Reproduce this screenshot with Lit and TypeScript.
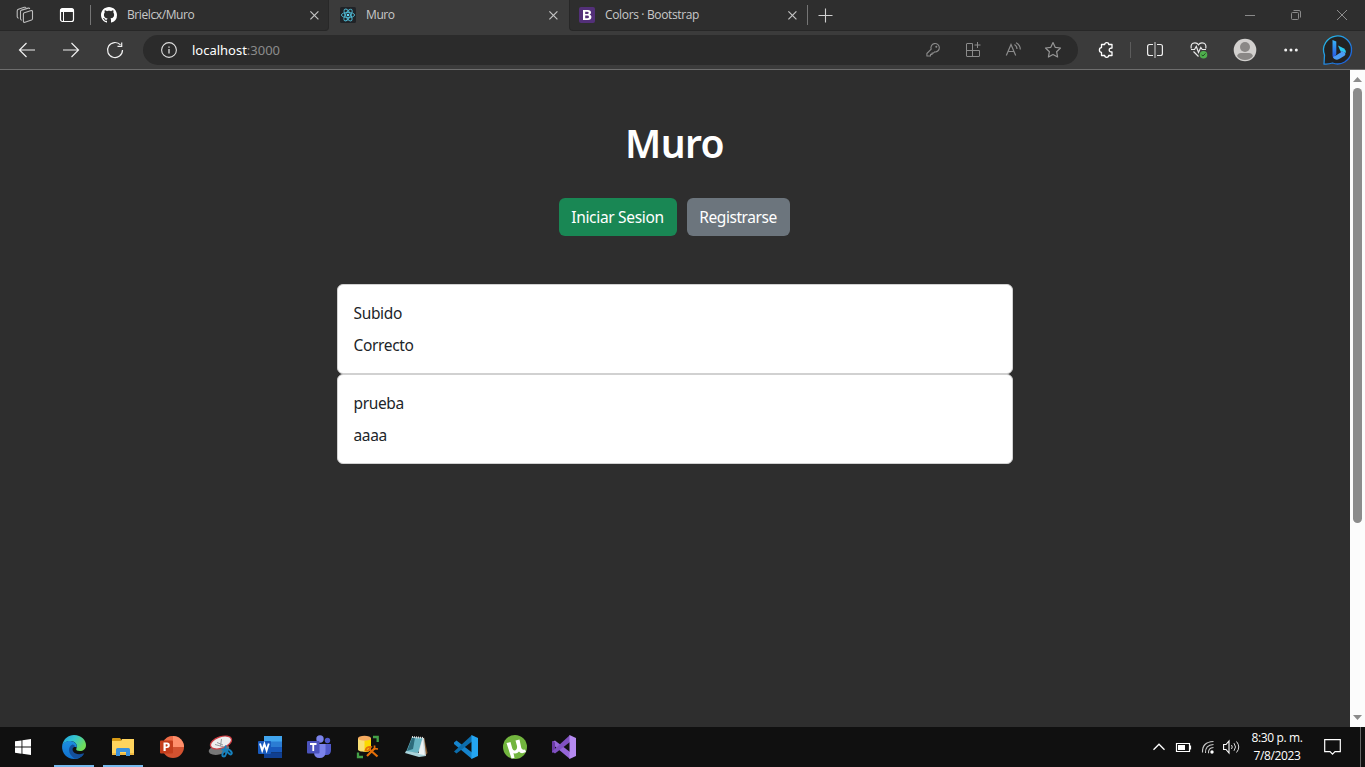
import { LitElement, html, css, svg } from 'lit';
import { customElement, property } from 'lit/decorators.js';

const poly = (points: string, fill: string) => svg`<polygon points=${points} fill=${fill} />`;

const glyphs: Record<string, [number, number, unknown]> = {
  workspaces: [18, 18, svg`<g fill="none" stroke="#bdbdbd" stroke-width="1.1" stroke-linejoin="round">
    <path d="M8.300 6.800 15.300 4.600Q16.500 4.400 16.500 5.500V12.500Q16.500 13.700 15.500 14.100L9 16.300Q7.400 16.600 7.400 15.300V8Q7.400 7.100 8.300 6.800Z"/>
    <path d="M4.500 12.800V5.600Q4.500 4.500 5.600 4.100L12.300 2.100Q13.500 1.900 13.700 3M4.500 12.800Q4.600 14 5.800 14.300"/>
    <path d="M1.200 10.800V5Q1.200 3.700 2.400 3.300L8.300 1.300Q9.600 1 10.200 1.600M1.200 10.800Q1.300 12 2.600 12.300"/></g>`],
  tabsmenu: [16, 16, svg`<rect x="1.5" y="1.5" width="13" height="13" rx="2" fill="none" stroke="#fff" stroke-width="1.2"/><path d="M1.5 5V3Q1.5 1.5 3 1.5H13Q14.5 1.5 14.5 3V5Z" fill="#fff"/><path d="M4.5 5V14.5" stroke="#fff"/>`],
  github: [16, 16, svg`<path fill="#fff" d="M8 0C3.58 0 0 3.58 0 8c0 3.54 2.29 6.53 5.47 7.59.4.07.55-.17.55-.38 0-.19-.01-.82-.01-1.49-2.01.37-2.53-.49-2.69-.94-.09-.23-.48-.94-.82-1.13-.28-.15-.68-.52-.01-.53.63-.01 1.08.58 1.23.82.72 1.21 1.87.87 2.33.66.07-.52.28-.87.51-1.07-1.78-.2-3.64-.89-3.64-3.95 0-.87.31-1.59.82-2.15-.08-.2-.36-1.02.08-2.12 0 0 .67-.21 2.2.82.64-.18 1.32-.27 2-.27s1.36.09 2 .27c1.53-1.04 2.2-.82 2.2-.82.44 1.1.16 1.92.08 2.12.51.56.82 1.27.82 2.15 0 3.07-1.87 3.75-3.65 3.95.29.25.54.73.54 1.48 0 1.07-.01 1.93-.01 2.2 0 .21.15.46.55.38A8.01 8.01 0 0 0 16 8c0-4.42-3.58-8-8-8z"/>`],
  react: [16, 16, svg`<rect width="16" height="16" rx="1.5" fill="#202327"/><g fill="none" stroke="#4fb9d3" stroke-width=".9"><ellipse cx="8" cy="8" rx="6.6" ry="2.6"/><ellipse cx="8" cy="8" rx="6.6" ry="2.6" transform="rotate(60 8 8)"/><ellipse cx="8" cy="8" rx="6.6" ry="2.6" transform="rotate(120 8 8)"/></g><circle cx="8" cy="8" r="1.3" fill="#61dafb"/>`],
  bootstrap: [16, 16, svg`<rect width="16" height="16" rx="2" fill="#533079"/><path fill="#fff" fill-rule="evenodd" d="M4 3H8.8C11 3 12 4.2 12 5.6C12 6.7 11.4 7.4 10.5 7.7C11.8 8 12.4 8.900 12.400 10.100C12.400 11.900 11.200 13 9 13H4ZM6.200 4.700V7H8.200Q9.700 7 9.700 5.800Q9.700 4.700 8.200 4.700ZM6.200 8.600V11.300H8.400Q10 11.300 10 9.900Q10 8.600 8.400 8.600Z"/>`],
  close: [10, 10, svg`<path d="M1.400 1.400 9.400 9.400M9.400 1.400 1.400 9.400" stroke="#c4c4c4" stroke-width="1.2"/>`],
  plus: [15, 15, svg`<path d="M7.5 .5V14.500M.5 7.500H14.500" stroke="#d0d0d0" stroke-width="1.1"/>`],
  min: [10, 10, svg`<path d="M0 5.500H10" stroke="#8a8a8a"/>`],
  restore: [10, 10, svg`<g fill="none" stroke="#8a8a8a"><rect x=".5" y="2.500" width="7" height="7" rx="1"/><path d="M2.500 .5H8Q9.500 .5 9.500 2V7.500"/></g>`],
  winclose: [10, 10, svg`<path d="M0 0 10 10M10 0 0 10" stroke="#8d8d8d"/>`],
  back: [18, 16, svg`<path d="M17 8H1.500M8.500 1 1.500 8 8.500 15" fill="none" stroke="#f0f0f0" stroke-width="1.200"/>`],
  forward: [18, 16, svg`<path d="M1 8H16.500M9.500 1 16.500 8 9.500 15" fill="none" stroke="#f0f0f0" stroke-width="1.200"/>`],
  reload: [18, 18, svg`<path d="M14.500 3.900A7.500 7.500 0 1 0 16.500 9M15.700 1.500V5.300H11.500" fill="none" stroke="#f0f0f0" stroke-width="1.200"/>`],
  info: [16, 16, svg`<circle cx="8" cy="8" r="7.400" fill="none" stroke="#dedede" stroke-width="1.100"/><path d="M8 7V11.500M8 4.500V5.800" stroke="#dedede" stroke-width="1.300"/>`],
  key: [14, 14, svg`<path d="M5.200 6.200A4.200 4.200 0 1 1 8.700 8.900L7.300 10.100H6V11.400H4.500V13H.9V10.500Z" fill="none" stroke="#8b8b8b" stroke-linejoin="round" stroke-width="1.100"/><circle cx="10.300" cy="3.800" r="1" fill="#8b8b8b"/>`],
  apps: [16, 16, svg`<path d="M7.500 1.500H2Q1.500 1.500 1.500 2V14Q1.500 14.500 2 14.500H14Q14.500 14.500 14.500 14V8.500H1.500M7.500 1.500V14.500M12.500 0V6M9.500 3H15.500" fill="none" stroke="#8b8b8b"/>`],
  read: [16, 16, svg`<path d="M1.300 13.500 6 2.500 10.700 13.500M3.100 9.500H9" fill="none" stroke="#8b8b8b" stroke-width="1.200"/><path d="M9.500 2.500Q12 4 12 7M11 .8Q15.300 2.800 15.300 7.500" fill="none" stroke="#8b8b8b" stroke-width="1.200"/>`],
  star: [18, 18, svg`<path d="M9 1.500 11.200 6.300 16.500 7 12.600 10.700 13.600 16 9 13.400 4.400 16 5.400 10.700 1.500 7 6.800 6.300Z" fill="none" stroke="#969696" stroke-width="1.200" stroke-linejoin="round"/>`],
  puzzle: [16, 16, svg`<path d="M3.500 2.500H6.700Q6.700 .700 8.700 .700Q10.700 .700 10.700 2.500H14V6Q11.200 5.900 11.200 8Q11.200 10.100 14 10V13.500H10.700Q10.700 15.300 8.700 15.300Q6.700 15.300 6.700 13.500H3.500V10.400Q1.400 10.300 1.400 8Q1.400 5.700 3.500 5.600Z" fill="none" stroke="#fff" stroke-width="1.300" stroke-linejoin="round"/>`],
  split: [16, 16, svg`<path d="M6 2.500H2.500Q.6 2.500 .6 4.500V11.500Q.6 13.500 2.500 13.500H6M10 2.500H13.500Q15.400 2.500 15.400 4.500V11.500Q15.400 13.500 13.500 13.500H10" fill="none" stroke="#eee" stroke-width="1.200"/><path d="M8 0V16" stroke="#bbb" stroke-width="1.200"/>`],
  heart: [18, 18, svg`<path d="M8.500 15.500 3.500 10.500M1.200 7.500Q.3 1.800 5 1.800Q7.300 1.800 8.500 3.800Q9.700 1.800 12 1.800Q16.700 1.800 15.800 7.500M1 8.500H4.500L6.300 5.500 8.500 11.500 10.800 6.500 12.200 8.500H16" fill="none" stroke="#e8e8e8" stroke-width="1.200"/><circle cx="13.500" cy="13.700" r="3.800" fill="#4fae4d"/><path d="M11.500 13.900 13 15 15.500 12.400" fill="none" stroke="#224f24"/>`],
  avatar: [24, 24, svg`<circle cx="12" cy="12" r="11.300" fill="#d2d0ce"/><circle cx="12" cy="9" r="5" fill="#8a8886"/><path d="M4 18Q5 15 8 15H16Q19 15 20 18A10 10 0 0 1 4 18Z" fill="#8a8886"/>`],
  dots: [14, 4, svg`<g fill="#f2f2f2"><circle cx="1.700" cy="2" r="1.500"/><circle cx="7" cy="2" r="1.500"/><circle cx="12.300" cy="2" r="1.500"/></g>`],
  bing: [30, 30, svg`<defs><linearGradient id="r" x1="0" y1="0" x2="1" y2="1"><stop stop-color="#27c1e8"/><stop offset="1" stop-color="#1b55dc"/></linearGradient><linearGradient id="b" x1="0" y1="0" x2="0" y2="1"><stop stop-color="#38b4f8"/><stop offset="1" stop-color="#2650e0"/></linearGradient></defs><path d="M1 29 1.500 20A14 14 0 1 1 9.500 28Q5 29.500 1 29Z" fill="#222" stroke="url(#r)" stroke-width="1.300"/><path d="M9.500 5 13.300 6.500V19L11 23.500Q9.500 22.500 9.500 20.500Z" fill="url(#b)"/><path d="M15 10.500 20.500 13.300Q23.300 15 22.800 18L17.300 15.800Z" fill="#2bc7ee"/><path d="M10 22Q11 24.800 14 24.800Q15.500 24.500 17 23.500L21.500 20.700Q23.500 18.500 21 17L17.300 15.800 18 17.300 13.300 20.200Z" fill="#4b9df5"/>`],
  windows: [16, 16, svg`<path fill="#fff" d="M0 2.300 6.500 1.400V7.500H0ZM7.400 1.200 16 0V7.500H7.400ZM0 8.500H6.500V14.700L0 13.800ZM7.400 8.500H16V16L7.400 14.800Z"/>`],
  edge: [24, 24, svg`<defs><linearGradient id="eg" x1="0" y1="0" x2="1" y2=".5"><stop stop-color="#1c9fe0"/><stop offset=".5" stop-color="#35c5cf"/><stop offset="1" stop-color="#70dc57"/></linearGradient><linearGradient id="eb" x1="0" y1="0" x2="0" y2="1"><stop stop-color="#1c8fe0"/><stop offset="1" stop-color="#1170ce"/></linearGradient></defs><path d="M.2 10.500C1.500 3.500 6.500 0 12 0C19.500 0 24 5.200 24 10C24 14 21 16 18 16C15.500 16 13.700 15 14.300 13.700C16 11 14 6 8 6C4 6 1.200 8.500.2 10.500Z" fill="url(#eg)"/><path d="M.1 11C.7 7.500 5 5.800 8.300 6C13 6.300 15.500 9.500 14.700 12.500C11 11 8.500 14 9.700 17.500C11.500 21.500 17 22.500 21.700 18.700C19.500 22.500 16 24 12 24C5 24-.5 18 .1 11Z" fill="url(#eb)"/><path d="M10.500 9.500C5.500 11.500 5.500 19 12.800 23.700C17 23.700 20.300 21.500 22 18.700Q21.800 18 21 18.500C14 21 9 16.500 11 12.800Q12 11.500 13.500 11.500Q12 9.500 10.500 9.500Z" fill="#144f9b"/>`],
  explorer: [22, 20, svg`<path d="M0 2Q0 1 1 1H8L9.500 3V7H0Z" fill="#d79b16"/><path d="M0 4H9L10 2H22V17Q22 18 21 18H1Q0 18 0 17Z" fill="#ffd45d"/><path d="M0 16H22V18H0Z" fill="#efb943"/><path d="M4 12.500Q4 11 5.500 11H16.500Q18 11 18 12.500V19H14V15H8V19H4Z" fill="#3b91dc"/>`],
  powerpoint: [24, 24, svg`<circle cx="13" cy="12" r="11" fill="#d35230"/><path d="M13 1A11 11 0 0 1 24 12H13Z" fill="#ff8f6b"/><path d="M2 12A11 11 0 0 1 13 1V12Z" fill="#ed6c47"/><rect y="5.500" width="13" height="13" rx="1" fill="#c43e1c"/><path fill="#fff" fill-rule="evenodd" d="M3.500 7.500H7Q9.800 7.500 9.800 10.300Q9.800 13 7 13H5.700V16H3.500ZM5.700 9.200V11.400H6.700Q7.700 11.400 7.700 10.300Q7.700 9.200 6.700 9.200Z"/>`],
  snip: [24, 24, svg`<ellipse cx="10" cy="14.500" rx="10.500" ry="5" fill="#777" transform="rotate(-13 10 14.500)"/><ellipse cx="12" cy="7.500" rx="11" ry="5.700" fill="#eee" stroke="#cf3d43" stroke-width="1.200" transform="rotate(-19 12 7.500)"/><path d="M6 9.500 15 12M12.500 4 11.500 11M8 7.500 14 10" stroke="#96999c" stroke-width="1"/><g fill="none" stroke="#1681bd" stroke-width="1.900"><path d="M12.500 14.500 19 14.500M17 10.500 15.500 15"/><ellipse cx="15.300" cy="18.700" rx="1.700" ry="2.900" transform="rotate(18 15.300 18.700)"/><ellipse cx="20.500" cy="17" rx="1.500" ry="2.900" transform="rotate(-42 20.500 17)"/></g>`],
  word: [24, 22, svg`<path d="M6 0H24V6H6Z" fill="#41a5ee"/><path d="M6 5.500H24V11H6Z" fill="#2b7cd3"/><path d="M6 11H24V16.500H6Z" fill="#185abd"/><path d="M6 16.500H24V22H6Z" fill="#103f91"/><rect y="5" width="13" height="13" rx="1" fill="#185abd"/><path d="M2 7.500 4.200 14.500 6.400 8 8.600 14.500 10.800 7.500" fill="none" stroke="#fff" stroke-width="1.900"/>`],
  teams: [24, 24, svg`<circle cx="20.500" cy="5.500" r="2.700" fill="#5059c9"/><circle cx="13" cy="4" r="3.700" fill="#7b83eb"/><path d="M15 9H24V15Q24 20 19.500 20H16Z" fill="#5059c9"/><path d="M7 9H18.500V17Q18.500 23 12.500 23Q7 23 7 17Z" fill="#7b83eb"/><rect y="6" width="12.500" height="12.500" rx="1" fill="#4b53bc"/><path d="M3 9H9.500M6.250 9V16" stroke="#fff" stroke-width="1.800"/>`],
  database: [24, 24, svg`<path d="M2 3V14.500C2 17.500 15 17.500 15 14.500V3Z" fill="#f8df75"/><path d="M8.500 4H15V14.500Q13 17 8.500 16.700Z" fill="#fbd900"/><ellipse cx="8.500" cy="3.300" rx="6.500" ry="2.500" fill="#f6ab60"/><path d="M17 2H21.700V7M2 17.500V22H7" fill="none" stroke="#43a047" stroke-width="2.300"/><path d="M11 21 18.500 13.500M13 14 21.500 21.500" stroke="#e56f08" stroke-width="2.200"/><path d="M9.500 15.500Q10.500 11.500 15 12L12.500 15.500ZM18.500 10.500 18.700 13.700 22 14" fill="none" stroke="#e56f08" stroke-width="1.700"/>`],
  notepad: [24, 24, svg`${poly('19,2 22.5,18 20,21 17,19', '#80572e')}${poly('7,2 19,3 21,21 15,20', '#cdd9dd')}${poly('7,2 17.5,3 13,18 1,17', '#67b3c2')}${poly('7,3 10,3 8,14 2,16', '#2d6b7b')}${poly('1,16 14,18 21,21 14,22 0,18', '#aad4db')}${poly('17.5,4 19.5,20 13.5,19', '#edf3f4')}<path d="M7 2 19 3" stroke="#ddd" stroke-width="2" stroke-dasharray="1 1"/>`],
  vscode: [24, 24, svg`${poly('0,7.5 2.5,5.5 18,17.5 18,24 0,9', '#1684cd')}${poly('0,16.500 18,0 18,6.5 2.500,18.500', '#0c6dac')}<path d="M17.500 0 24 3V21L17.500 24Z" fill="#24a5f2"/>`],
  utorrent: [24, 24, svg`<circle cx="12" cy="12" r="12" fill="#72b53e"/><path d="M3.500 8 7.500 7 9.300 13.500Q10.500 16.500 12.500 15.200Q14.500 14.200 14 11L12.500 5.500 16.500 4.500 18.300 13Q19.200 15.500 22 14.500L23 17Q18 19.500 16 16.500Q13.500 19.500 10.500 18L11.500 23 8.500 23.500Z" fill="#fff"/>`],
  studio: [24, 24, svg`${poly('0,7 3,5.5 18,17 18,24 0,9', '#9565d7')}${poly('0,6 3,7.500 3,16.500 0,18', '#6a3aa5')}${poly('0,16.5 18,0 18,7 3,18.5', '#8051c1')}<path d="M17.500 0 24 3V21L17.500 24Z" fill="#b58af0"/>`],
  chevron: [12, 8, svg`<path d="M.5 6.700 6 1.200 11.500 6.700" fill="none" stroke="#fff" stroke-width="1.300"/>`],
  battery: [16, 9, svg`<path d="M.5 .5H13.500V8.500H.5ZM14 3H14.500V6H14" fill="none" stroke="#fff" stroke-width="1.200"/><rect x="2" y="2" width="7" height="5" fill="#fff"/>`],
  wifi: [14, 14, svg`<g fill="none" stroke="#c9c9c9" stroke-width="1.100"><path d="M1.500 12.500Q1 2 12.500 1.500"/><path d="M4.500 13Q4 5 12.500 4.500"/><path d="M7.500 13.300Q7 8 12.500 7.500"/></g><circle cx="11" cy="12" r="1.700" fill="#fff"/>`],
  volume: [17, 14, svg`<path d="M.6 4.500H3L6 1V13L3 9.500H.6Z" fill="none" stroke="#fff" stroke-width="1.100"/><path d="M8.500 5Q10 7 8.500 9M11 3.200Q14 7 11 10.800M13.500 1.500Q18 7 13.500 12.500" fill="none" stroke="#ddd"/>`],
  notice: [17, 17, svg`<path d="M.7 .7H16.300V12.700H11L8.500 15.200 6 12.700H.7Z" fill="none" stroke="#fff" stroke-width="1.200"/>`],
  up: [9, 5, svg`${poly('0,5 4.500,0 9,5', '#8b8b8b')}`],
  down: [9, 5, svg`${poly('0,0 4.500,5 9,0', '#8b8b8b')}`],
};

@customElement('ui-glyph')
class UiGlyph extends LitElement {
  @property() name = '';
  static styles = css`:host { display: block; flex: none; } svg { display: block; overflow: visible; }`;
  render() {
    const [w, h, body] = glyphs[this.name];
    return html`<svg width=${w} height=${h} viewBox="0 0 ${w} ${h}">${body}</svg>`;
  }
}

@customElement('app-root')
class AppRoot extends LitElement {
  static styles = css`
    :host { display: flex; flex-direction: column; width: 1365px; height: 767px; overflow: hidden; background: #2e2e2e; color: #fff; font-family: "Noto Sans", "Open Sans", sans-serif; }
    * { box-sizing: border-box; }
    .slot { display: flex; align-items: center; justify-content: center; flex: none; width: 44px; height: 100%; }
    .w34 { width: 34px; } .w36 { width: 34px; } .w40 { width: 40px; } .w46 { width: 46px; } .w48 { width: 47px; } .w50 { width: 50px; } .w56 { width: 56px; }
    .grow { flex: 1; }
    .strip { display: flex; align-items: stretch; height: 31px; background: #3b3b3b; }
    .strip-part { display: flex; align-items: center; background: #2e2e2e; border-bottom: 1px solid #272727; }
    .left { width: 329px; border-right: 1px solid #282828; border-bottom-right-radius: 4px; }
    .right { flex: 1; border-left: 1px solid #272727; border-bottom-left-radius: 4px; }
    .rule { width: 1px; height: 20px; background: #757575; flex: none; }
    .first { margin-left: 6px; }
    .tab { display: flex; align-items: center; height: 30px; width: 237px; padding: 0 9px 0 10px; font: 12px/16px "Open Sans", sans-serif; color: #c9c9c9; }
    .tab span { flex: 1; padding-left: 10px; white-space: nowrap; }
    .active { width: 240px; padding: 0 11px; }
    .third { width: 237px; padding: 0 10px 0 9px; }
    .t1 { letter-spacing: -.4px; } .t2 { letter-spacing: -.4px; } .t3 { letter-spacing: -.35px; }
    .toolbar { display: flex; align-items: center; height: 39px; padding-left: 5px; background: #3b3b3b; border-bottom: 1px solid #6e6e6e; }
    .address { display: flex; align-items: center; width: 935px; height: 30px; margin: 0 6px; padding: 0 5px 0 18px; border-radius: 15px; background: #2b2b2b; font-size: 13px; letter-spacing: -.01px; }
    .url { margin-left: 15px; flex: 1; } .port { color: #8b8b8b; }
    .toolrule { height: 16px; margin: 0 2px; background: #5c5c5c; }
    .avatar { margin-left: 1px; }
    .view { display: flex; height: 657px; }
    .page { flex: 1; display: flex; flex-direction: column; align-items: center; padding-top: 49px; }
    h1 { margin: 0 1px 0 0; font-size: 39px; line-height: 48px; font-weight: 600; letter-spacing: -.6px; }
    .actions { display: flex; gap: 10px; margin: 31px 2px 48px 0; }
    .btn { width: 118px; height: 38px; padding: 0; border: 0; border-radius: 6px; background: #198754; color: #fff; font: 15.500px/38px "Noto Sans", sans-serif; letter-spacing: -.32px; white-space: nowrap; }
    .gray { width: 103px; background: #6c757d; letter-spacing: -.45px; }
    .card { width: 676px; height: 90px; padding: 16px 16px 16px 15.500px; border: 1px solid #d1d1d1; border-radius: 6px; background: #fff; color: #212529; font-size: 15.500px; line-height: 24px; letter-spacing: -.35px; display: grid; gap: 8px; }
    .scroll { width: 15px; display: flex; flex-direction: column; align-items: center; background: #fcfcfc; padding: 7px 0; }
    .thumb { width: 9px; height: 435px; margin-top: 6px; border-radius: 5px; background: #8b8b8b; }
    .taskbar { display: flex; height: 40px; background: #101010; }
    .start { width: 46px; margin-right: 4px; }
    .app { width: 48px; margin-right: 1px; height: 40px; }
    .running { width: 40px; margin: 0 5px 0 4px; border-bottom: 2px solid #76b9ed; padding-top: 2px; }
    .w26 { width: 26px; } .w22 { width: 22px; } .w24 { width: 24px; }
    .clock { width: 62px; font: 12px/18px "Open Sans", sans-serif; text-align: center; padding: 2px 0 0 8px; letter-spacing: -.35px; white-space: nowrap; }
    .desk { width: 5px; border-left: 1px solid #656565; }
  `;

  slotFor(name: string, cls = '') {
    return html`<div class="slot ${cls}"><ui-glyph name=${name}></ui-glyph></div>`;
  }

  tab(icon: string, title: string, cls: string, titleCls: string) {
    return html`<div class="tab ${cls}"><ui-glyph name=${icon}></ui-glyph><span class=${titleCls}>${title}</span><ui-glyph name="close"></ui-glyph></div>`;
  }

  render() {
    const posts = [['Subido', 'Correcto'], ['prueba', 'aaaa']];
    const apps = ['powerpoint', 'snip', 'word', 'teams', 'database', 'notepad', 'vscode', 'utorrent', 'studio'];
    return html`
      <div class="strip">
        <div class="strip-part left">${this.slotFor('workspaces', 'w50')}${this.slotFor('tabsmenu', 'w34')}<i class="rule first"></i>${this.tab('github', 'Brielcx/Muro', '', 't1')}</div>
        ${this.tab('react', 'Muro', 'active', 't2')}
        <div class="strip-part right">${this.tab('bootstrap', 'Colors · Bootstrap', 'third', 't3')}<i class="rule"></i>${this.slotFor('plus', 'w36')}<div class="grow"></div>${this.slotFor('min', 'w46')}${this.slotFor('restore', 'w46')}${this.slotFor('winclose', 'w46')}</div>
      </div>
      <div class="toolbar">
        ${this.slotFor('back')}${this.slotFor('forward')}${this.slotFor('reload')}
        <div class="address"><ui-glyph name="info"></ui-glyph><div class="url">localhost<span class="port">:3000</span></div>${['key', 'apps', 'read', 'star'].map((n) => this.slotFor(n, 'w40'))}</div>
        ${this.slotFor('puzzle')}<i class="rule toolrule"></i>${this.slotFor('split')}${this.slotFor('heart')}${this.slotFor('avatar', 'w46 avatar')}${this.slotFor('dots', 'w46')}${this.slotFor('bing', 'w48')}
      </div>
      <div class="view">
        <main class="page">
          <h1>Muro</h1>
          <div class="actions"><button class="btn">Iniciar Sesion</button><button class="btn gray">Registrarse</button></div>
          ${posts.map(([title, body]) => html`<article class="card"><div>${title}</div><div>${body}</div></article>`)}
        </main>
        <div class="scroll"><ui-glyph name="up"></ui-glyph><div class="thumb"></div><div class="grow"></div><ui-glyph name="down"></ui-glyph></div>
      </div>
      <div class="taskbar">
        ${this.slotFor('windows', 'start')}${this.slotFor('edge', 'app running')}${this.slotFor('explorer', 'app running')}${apps.map((n) => this.slotFor(n, 'app'))}
        <div class="grow"></div>
        ${this.slotFor('chevron', 'w26')}${this.slotFor('battery', 'w24')}${this.slotFor('wifi', 'w24')}${this.slotFor('volume', 'w22')}
        <div class="clock"><div>8:30 p. m.</div><div>7/8/2023</div></div>${this.slotFor('notice', 'w56')}<div class="desk"></div>
      </div>`;
  }
}
